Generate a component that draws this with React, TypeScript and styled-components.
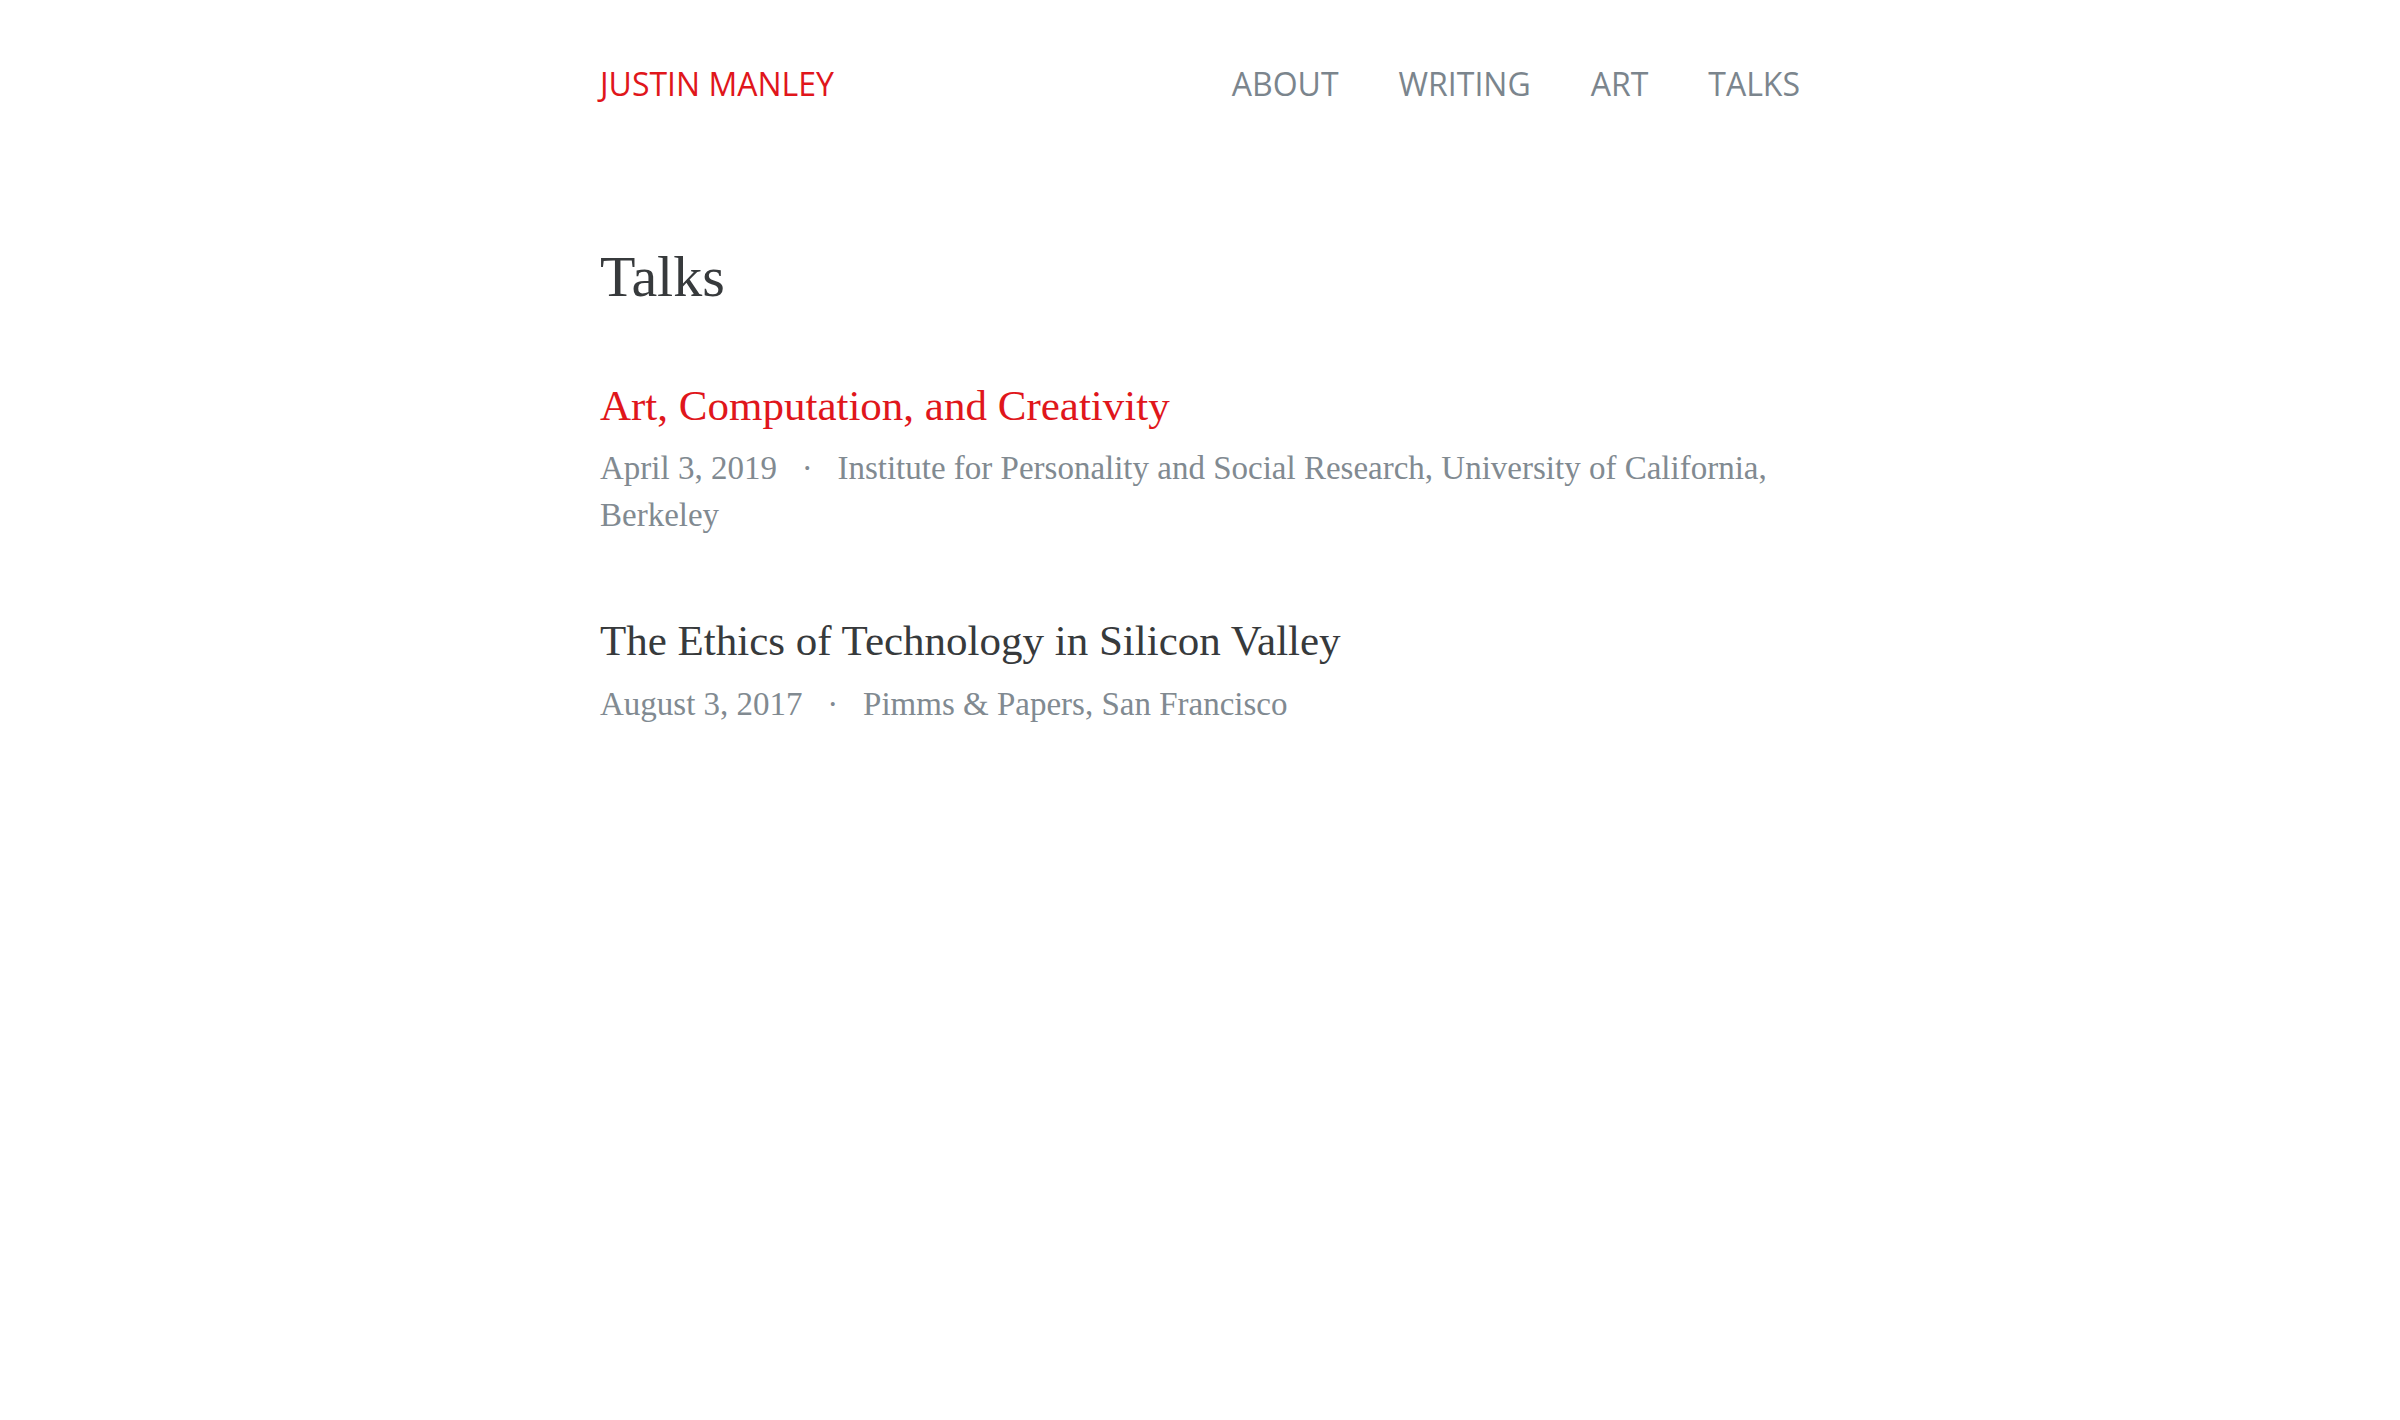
import React from 'react'
import styled, { createGlobalStyle } from 'styled-components'

const GlobalStyle = createGlobalStyle`
  html, body {
    margin: 0;
    padding: 0;
    background: #ffffff;
  }
`

const talks = [
  {
    title: 'Art, Computation, and Creativity',
    date: 'April 3, 2019',
    venue: 'Institute for Personality and Social Research, University of California, Berkeley',
    highlight: true,
  },
  {
    title: 'The Ethics of Technology in Silicon Valley',
    date: 'August 3, 2017',
    venue: 'Pimms & Papers, San Francisco',
    highlight: false,
  },
]

const navLinks = ['About', 'Writing', 'Art', 'Talks']

const App = () => {
  return (
    <>
      <GlobalStyle />
      <Page>
        <Header>
          <Brand href="#">Justin Manley</Brand>
          <Nav>
            {navLinks.map(link => (
              <NavLink key={link} href="#">{link}</NavLink>
            ))}
          </Nav>
        </Header>
        <Main>
          <Heading>Talks</Heading>
          <TalkList>
            {talks.map(talk => (
              <Talk key={talk.title}>
                <TalkTitle $highlight={talk.highlight}>{talk.title}</TalkTitle>
                <Meta>
                  {talk.date}
                  <Dot>·</Dot>
                  {talk.venue}
                </Meta>
              </Talk>
            ))}
          </TalkList>
        </Main>
      </Page>
    </>
  )
}

const Page = styled.div`
  width: 1200px;
  margin: 0 auto;
  padding-top: 60px;
`

const Header = styled.header`
  display: flex;
  justify-content: space-between;
  align-items: center;
  font-family: "Open Sans", "Noto Sans", sans-serif;
  font-size: 32px;
  line-height: 48px;
  text-transform: uppercase;
`

const Brand = styled.a`
  color: #e0161b;
  text-decoration: none;
`

const Nav = styled.nav`
  display: flex;
  gap: 60px;
`

const NavLink = styled.a`
  color: #7b858d;
  text-decoration: none;
`

const Main = styled.main`
  padding-top: 134px;
  font-family: "Liberation Serif", "Times New Roman", serif;
`

const Heading = styled.h1`
  margin: 0;
  font-size: 58px;
  line-height: 1.2;
  font-weight: 400;
  color: #373a3c;
`

const TalkList = styled.div`
  display: flex;
  flex-direction: column;
  gap: 74px;
  padding-top: 66px;
`

const Talk = styled.article`
  display: flex;
  flex-direction: column;
  gap: 12px;
`

const TalkTitle = styled.a<{ $highlight: boolean }>`
  font-size: 43px;
  line-height: 1.3;
  color: ${p => (p.$highlight ? '#e0161b' : '#373a3c')};
  text-decoration: none;
`

const Meta = styled.p`
  margin: 0;
  font-size: 33px;
  line-height: 47px;
  color: #818a91;
`

const Dot = styled.span`
  margin: 0 0.75em;
`

export default App
